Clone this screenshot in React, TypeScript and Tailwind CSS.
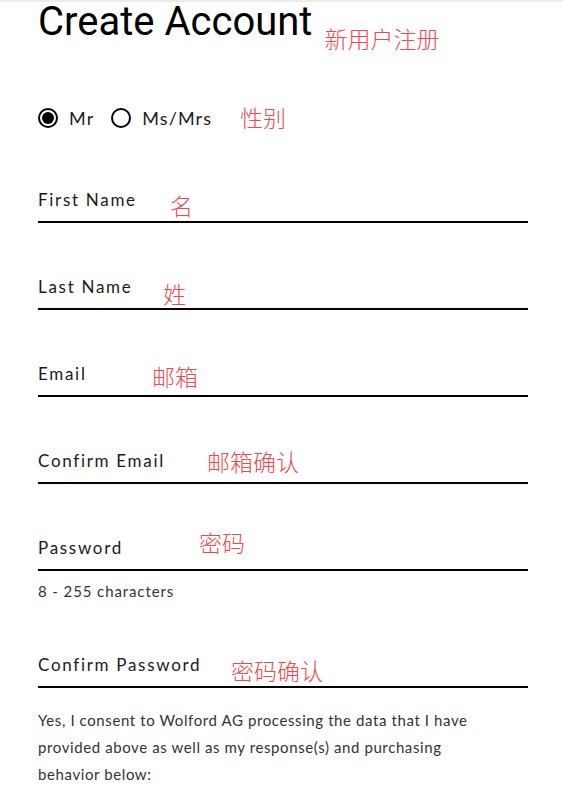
import React from 'react';

// Campos do formulário com as notas em vermelho
const CAMPOS = [
  { label: 'First Name', nota: '名', left: 170, top: 4 },
  { label: 'Last Name', nota: '姓', left: 163, top: 5 },
  { label: 'Email', nota: '邮箱', left: 152, top: 1 },
  { label: 'Confirm Email', nota: '邮箱确认', left: 207, top: -1 },
  { label: 'Password', nota: '密码', left: 199, top: -7, ajuda: '8 - 255 characters' },
  { label: 'Confirm Password', nota: '密码确认', left: 231, top: 4 },
];

const Nota = ({ texto, className = '', style }: { texto: string; className?: string; style?: React.CSSProperties }) => (
  <span
    className={`text-[23px] leading-[23px] text-[#f04a4f] font-light whitespace-nowrap ${className}`}
    style={{ fontFamily: '"Noto Sans CJK SC", sans-serif', ...style }}
  >
    {texto}
  </span>
);

const Radio = ({ marcado, label }: { marcado: boolean; label: string }) => (
  <div className="flex items-center">
    <span className="w-[20px] h-[20px] rounded-full border-2 border-black flex items-center justify-center">
      {marcado && <span className="w-[12px] h-[12px] rounded-full bg-black"></span>}
    </span>
    <span className="ml-[11px] text-[18px] leading-[24px] tracking-[0.06em] text-[#1a1a1a]">{label}</span>
  </div>
);

export default function App() {
  return (
    <div
      className="w-[563px] min-h-[789px] bg-white border-t-2 border-[#ececec] pl-[38px] pr-[35px]"
      style={{ fontFamily: 'Lato, "Noto Sans CJK SC", sans-serif' }}
    >
      {/* Título */}
      <div className="flex items-start h-[40px]">
        <h1
          className="text-[40px] leading-[40px] text-black font-normal"
          style={{ fontFamily: 'Roboto, sans-serif' }}
        >
          Create Account
        </h1>
        <Nota texto="新用户注册" className="mt-[25px] ml-[12px]" />
      </div>

      {/* Sexo */}
      <div className="relative flex items-center h-[24px] mt-[64px]">
        <Radio marcado label="Mr" />
        <div className="ml-[17px]">
          <Radio marcado={false} label="Ms/Mrs" />
        </div>
        <Nota texto="性别" className="absolute" style={{ left: 202, top: 0 }} />
      </div>

      {/* Campos */}
      <div className="flex flex-col pt-[6px]">
        {CAMPOS.map((campo) => (
          <div key={campo.label} className="flex flex-col">
            <div className="relative mt-[54px] border-b-2 border-black pb-[11px]">
              <label className="block text-[17px] leading-[20px] tracking-[0.1em] text-[#1a1a1a]">
                {campo.label}
              </label>
              <Nota texto={campo.nota} className="absolute" style={{ left: campo.left - 38, top: campo.top }} />
            </div>
            {campo.ajuda && (
              <p className="mt-[10px] text-[15px] leading-[20px] tracking-[0.06em] text-[#333]">{campo.ajuda}</p>
            )}
          </div>
        ))}
      </div>

      {/* Consentimento */}
      <p className="mt-[19px] pr-[40px] text-[15px] leading-[27px] tracking-[0.04em] text-[#333]">
        Yes, I consent to Wolford AG processing the data that I have provided above as well as my response(s) and
        purchasing behavior below:
      </p>
    </div>
  );
}
